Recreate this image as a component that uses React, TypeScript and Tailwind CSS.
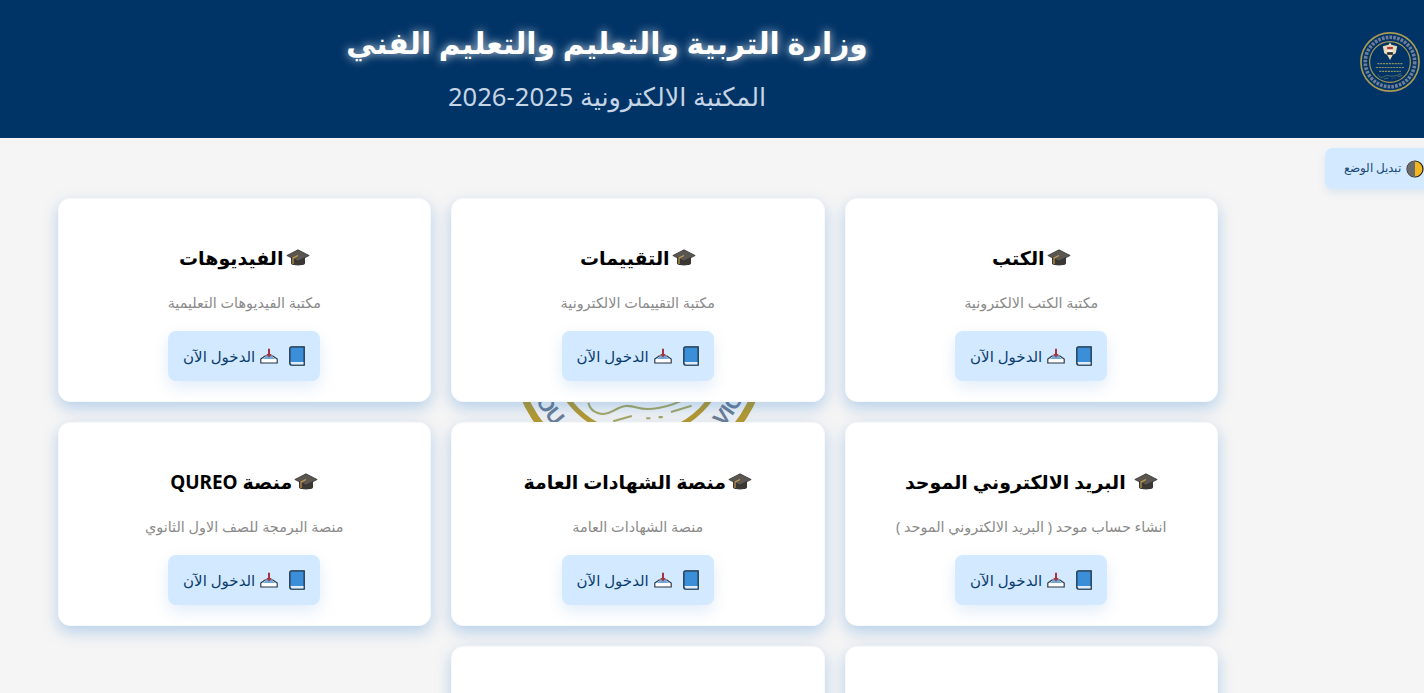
const arabicFont = "font-['Noto_Sans','DejaVu_Sans',sans-serif]";

function Cap() {
  return (
    <svg viewBox="0 0 24 18" className="h-[18px] w-[24px] shrink-0">
      <path d="M5 8v6.500c0 2.500 14 2.500 14 0V8z" fill="#3a3734" />
      <path d="M.8 6.500 12 .8l11.200 5.700L12 12.200z" fill="#5a5753" stroke="#2b2926" strokeWidth="0.700" />
      <path d="M12 6.500 7 9v6" fill="none" stroke="#d3a24a" strokeWidth="1.100" />
    </svg>
  );
}

function Tray() {
  return (
    <svg viewBox="0 0 18 16" className="h-[16px] w-[18px] shrink-0">
      <path d="M.8 11 5 8h8l4.200 3v4H.8z" fill="#fff" stroke="#24303c" strokeWidth="1.100" />
      <path d="M2.500 11 9 6.500l6.500 4.500z" fill="#6fa8d8" />
      <path d="M8 .8h2v5.200h1.800L9 9.500 6.200 6H8z" fill="#a8323c" />
    </svg>
  );
}

function Book() {
  return (
    <svg viewBox="0 0 16 20" className="h-[20px] w-[16px] shrink-0">
      <path d="M.8 2.500A1.700 1.700 0 0 1 2.500.8h12.700v18.400H2.500a1.700 1.700 0 0 1-1.700-1.700z" fill="#3b8fd9" stroke="#1d2f3f" strokeWidth="1.300" />
      <path d="M1.500 16h13v2.500h-12z" fill="#e4edf5" />
    </svg>
  );
}

// الشعار: نفس الرسم للهيدر وللخلفية خلف الكروت
function Seal({
  size,
  band,
  ring,
  labels,
  className,
}: {
  size: number;
  band: string;
  ring: string;
  labels?: { text: string; at: number }[];
  className?: string;
}) {
  return (
    <svg viewBox="0 0 250 250" width={size} height={size} className={className}>
      <defs>
        <path id="seal-arc" d="M13 125A112 112 0 0 0 237 125" />
      </defs>
      <circle cx="125" cy="125" r="121" fill="none" stroke={ring} strokeWidth="7" />
      <circle cx="125" cy="125" r="85" fill="none" stroke={ring} strokeWidth="5" />
      {labels ? (
        <text fontSize="21" fontWeight="700" fill={band} textAnchor="middle" fontFamily="'Liberation Sans', sans-serif">
          {labels.map((l) => (
            <textPath key={l.at} href="#seal-arc" startOffset={l.at}>
              {l.text}
            </textPath>
          ))}
        </text>
      ) : (
        <circle cx="125" cy="125" r="103" fill="none" stroke={band} strokeWidth="15" strokeDasharray="11 5" />
      )}
      <path d="M125 44l6 9 24 6-6 30-12 6-12 22-12-22-12-6-6-30 24-6z" fill="#e6dcb8" />
      <rect x="113" y="62" width="24" height="11" fill="#b23a40" />
      <rect x="113" y="73" width="24" height="11" fill="#f4f1e6" />
      <rect x="113" y="84" width="24" height="11" fill="#2a2a2a" />
      <path d="M72 132h106M66 148h118M80 164h90" fill="none" stroke="#a9a860" strokeWidth="5" strokeDasharray="9 3" opacity="0.8" />
      <path
        d="M76 178c2 10 14 14 24 8s14-6 24-3 30 0 48-10M100 196l18-5M132 193h4M144 192h4M156 187l20-6"
        fill="none"
        stroke="#a9a860"
        strokeWidth="2"
      />
    </svg>
  );
}

const cards = [
  { title: "الكتب", desc: "مكتبة الكتب الالكترونية" },
  { title: "التقييمات", desc: "مكتبة التقييمات الالكترونية" },
  { title: "الفيديوهات", desc: "مكتبة الفيديوهات التعليمية" },
  { title: "البريد الالكتروني الموحد", desc: "انشاء حساب موحد ( البريد الالكتروني الموحد )", wide: true },
  { title: "منصة الشهادات العامة", desc: "منصة الشهادات العامة" },
  { title: "منصة QUREO", desc: "منصة البرمجة للصف الاول الثانوي" },
  { title: "", desc: "" },
  { title: "", desc: "" },
];

function Card({ title, desc, wide }: { title: string; desc: string; wide?: boolean }) {
  return (
    <div className="flex h-[204px] flex-col items-center rounded-[12px] border border-[#f7f9fb] bg-white pt-[44px] shadow-[0_6px_16px_rgba(0,100,200,0.26)]">
      {title !== "" && (
        <>
          <h3 className={`flex h-[30px] items-center text-[19px] font-bold text-black ${wide ? "gap-[8px]" : "gap-[2px]"}`}>
            <Cap />
            <span>{title}</span>
          </h3>
          <p className="mt-[21px] h-[18px] text-[14.4px] leading-[18px] text-[#8a8a8a]">{desc}</p>
          <a className="mt-[19px] flex h-[50px] w-[152px] items-center rounded-[8px] bg-[#d2e9ff] pr-[15px] text-[15px] text-[#0b3d6e] shadow-[0_6px_16px_rgba(0,100,200,0.12)]">
            <Book />
            <span className="mr-[11px]">
              <Tray />
            </span>
            <span className="mr-[5px]">الدخول الآن</span>
          </a>
        </>
      )}
    </div>
  );
}

export default function App() {
  return (
    <div dir="rtl" className={`relative h-[693px] overflow-hidden bg-[#f5f5f5] ${arabicFont}`}>
      <header className="flex h-[138px] items-center bg-[#003366] pr-[4px]">
        <Seal size={60} band="#6f7f99" ring="#a89a55" className="mb-[14px] shrink-0" />
        <div className="mr-[490px] flex w-[526px] flex-col items-center pb-[4px]">
          <h1 className="whitespace-nowrap text-[29.7px] font-bold leading-[48px] text-white [text-shadow:0_0_10px_rgba(255,255,255,0.8)]">
            وزارة التربية والتعليم والتعليم الفني
          </h1>
          <p className="mt-[12px] whitespace-nowrap text-[25.6px] leading-[36px] text-[#c5d5e5]">المكتبة الالكترونية 2025-2026</p>
        </div>
      </header>

      <button className="absolute left-[1325px] top-[148px] flex h-[41px] w-[110px] items-center gap-[5px] rounded-[8px] bg-[#d2e9ff] pr-[11px] font-['Liberation_Sans',sans-serif] text-[12.200px] text-[#1a4a78] shadow-[0_4px_10px_rgba(0,100,200,0.1)]">
        <svg viewBox="0 0 18 18" className="h-[18px] w-[18px] shrink-0">
          <circle cx="9" cy="9" r="8" fill="#f3b61f" stroke="#222" strokeWidth="1.200" />
          <path d="M9 1a8 8 0 0 0 0 16z" fill="#6b6b6b" />
        </svg>
        <span>تبديل الوضع</span>
      </button>

      <div className="absolute left-[510px] top-[219px]">
        <Seal
          size={258}
          band="#6e7f96"
          ring="#b99b2c"
          labels={[
            { text: "OU", at: 68 },
            { text: "VIC", at: 284 },
          ]}
        />
      </div>

      <main className="relative ml-[57.500px] mr-[206px] mt-[60px] grid grid-cols-3 gap-[20px]">
        {cards.map((c, i) => (
          <Card key={i} title={c.title} desc={c.desc} wide={c.wide} />
        ))}
      </main>
    </div>
  );
}
